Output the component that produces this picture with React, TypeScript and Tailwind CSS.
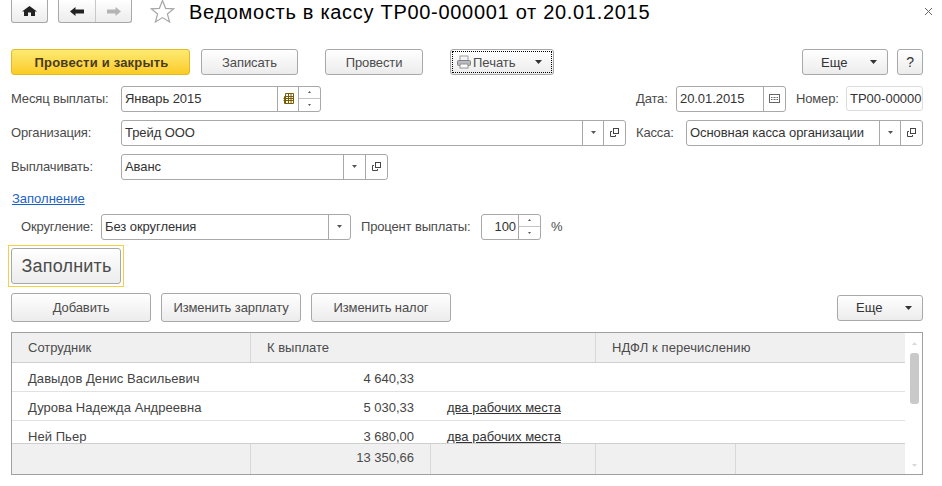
import React from "react";

const F = "[font-family:'Liberation_Sans',Arial,sans-serif]";

function Caret({ small = false }: { small?: boolean }) {
  return (
    <svg width={small ? 5 : 7} height={small ? 3 : 4} viewBox={small ? "0 0 5 3" : "0 0 7 4"} className="shrink-0">
      <path d={small ? "M0 0h5L2.5 3z" : "M0 0h7L3.5 4z"} fill={small ? "#555" : "#333"} />
    </svg>
  );
}

function Btn({ w, h = "h-[26px]", children, className = "" }: { w: string; h?: string; children: React.ReactNode; className?: string }) {
  return (
    <div className={`${w} ${h} shrink-0 rounded-[3px] border border-[#a8a8a8] bg-gradient-to-b from-white to-[#ececec] flex items-center justify-center text-[#4b4b4b] tracking-[-0.1px] ${className}`}>
      {children}
    </div>
  );
}

function MoreBtn({ className = "" }: { className?: string }) {
  return (
    <div className={`w-[86px] h-[26px] shrink-0 rounded-[3px] border border-[#a8a8a8] bg-gradient-to-b from-white to-[#ececec] flex items-center pl-[18px] text-[#333] ${className}`}>
      <span className="w-[28px]">Еще</span>
      <span className="ml-[21px]"><Caret /></span>
    </div>
  );
}

function Cell({ w, children }: { w: string; children: React.ReactNode }) {
  return <div className={`${w} h-full border-l border-[#a8a8a8] flex items-center justify-center shrink-0`}>{children}</div>;
}

function OpenIcon() {
  return (
    <svg width="9" height="9" viewBox="0 0 9 9" fill="none" stroke="#444" strokeWidth="1">
      <rect x="3.5" y="0.5" width="5" height="5" />
      <path d="M2 3.5H0.5V8.5H5.5V7" />
    </svg>
  );
}

function Spin() {
  return (
    <div className="w-[22px] h-full border-l border-[#a8a8a8] flex flex-col shrink-0">
      <div className="flex-1 flex items-center justify-center border-b border-[#c4c4c4]">
        <svg width="3" height="2" viewBox="0 0 3 2"><path d="M1.5 0L3 2H0z" fill="#555" /></svg>
      </div>
      <div className="flex-1 flex items-center justify-center">
        <svg width="3" height="2" viewBox="0 0 3 2"><path d="M0 0h3L1.5 2z" fill="#555" /></svg>
      </div>
    </div>
  );
}

function Field({ w, children, text, align = "" }: { w: string; children?: React.ReactNode; text: string; align?: string }) {
  return (
    <div className={`${w} h-[26px] shrink-0 rounded-[3px] border border-[#a8a8a8] bg-white flex items-center overflow-hidden text-[#333]`}>
      <div className={`flex-1 min-w-0 pl-[3px] whitespace-nowrap overflow-hidden tracking-[-0.07px] ${align}`}>{text}</div>
      {children}
    </div>
  );
}

function Label({ className = "", children }: { className?: string; children: React.ReactNode }) {
  return <div className={`shrink-0 whitespace-nowrap text-[#4b4b4b] tracking-[-0.15px] ${className}`}>{children}</div>;
}

const calendarGrid = [0, 1, 2, 3, 4];

function Row({ name, amount, link, last = false }: { name: string; amount: string; link?: boolean; last?: boolean }) {
  return (
    <div className={`flex shrink-0 h-[29px] text-[#444] ${last ? "" : "border-b border-[#e2e2e2]"}`}>
      <div className="w-[238px] pl-[16px] pt-[8px] whitespace-nowrap tracking-[0.05px]">{name}</div>
      <div className="w-[164px] text-right pt-[8px]">{amount}</div>
      {link && <div className="pl-[33px] pt-[8px] underline whitespace-nowrap text-[#333]">два рабочих места</div>}
    </div>
  );
}

export default function App() {
  return (
    <div className={`${F} w-[942px] h-[486px] overflow-hidden bg-white text-[13px] leading-[15px] relative`}>
      {/* header */}
      <div className="flex items-start h-[49px]">
        <div className="ml-[11px] w-[37px] h-[23px] rounded-b-[3px] border border-t-0 border-[#a8a8a8] bg-gradient-to-b from-white to-[#ececec] flex items-center justify-center">
          <svg width="15" height="10" viewBox="0 0 15 10"><path d="M7.5 0L15 5.5H13V10H9V6.5H6V10H2V5.5H0z" fill="#222" /></svg>
        </div>
        <div className="ml-[10px] w-[74px] h-[23px] rounded-b-[3px] border border-t-0 border-[#a8a8a8] bg-gradient-to-b from-white to-[#ececec] flex">
          <div className="w-[37px] h-full flex items-center justify-center border-r border-[#c8c8c8]">
            <svg width="14" height="9" viewBox="0 0 14 9"><path d="M0 4.5L5.5 0V2.5H14V6.5H5.5V9z" fill="#222" /></svg>
          </div>
          <div className="flex-1 flex items-center justify-center">
            <svg width="14" height="9" viewBox="0 0 14 9"><path d="M14 4.5L8.5 0V2.5H0V6.5H8.5V9z" fill="#b4b4b4" /></svg>
          </div>
        </div>
        <svg className="ml-[18px] mt-[-1px]" width="25" height="24" viewBox="0 0 25 24" fill="#fff" stroke="#a6a6a6" strokeWidth="1.2">
          <path d="M12.5 1.5L15.6 9.3L23.8 9.8L17.4 15L19.6 23L12.5 18.6L5.4 23L7.6 15L1.2 9.8L9.4 9.3z" />
        </svg>
        <div className="ml-[14px] text-[20px] leading-[24px] tracking-[0.7px] text-black whitespace-nowrap">Ведомость в кассу ТР00-000001 от 20.01.2015</div>
        <svg className="absolute left-[925px] top-[8px]" width="7" height="7" viewBox="0 0 7 7" stroke="#666" strokeWidth="1"><path d="M0 0L7 7M7 0L0 7" /></svg>
      </div>

      {/* command bar */}
      <div className="flex h-[26px] pl-[11px]">
        <div className="w-[179px] h-[26px] shrink-0 rounded-[3px] border border-[#e3b92a] bg-gradient-to-b from-[#fdea70] to-[#fbcb1e] flex items-center justify-center pl-[2px] font-bold tracking-[0.2px] text-[#4a3b20]">Провести и закрыть</div>
        <Btn w="w-[97px]" className="ml-[11px]">Записать</Btn>
        <Btn w="w-[98px]" className="ml-[27px]">Провести</Btn>
        <div className="ml-[27px] w-[104px] h-[26px] shrink-0 rounded-[3px] border border-[#a8a8a8] bg-gradient-to-b from-white to-[#ececec] p-[1px]">
          <div className="w-full h-full border border-dotted border-black flex items-center pl-[4px] text-[#4b4b4b]">
            <svg width="14" height="14" viewBox="0 0 14 14" className="shrink-0">
              <rect x="3" y="1" width="8" height="5" fill="#f4f4f4" stroke="#a0a0a0" />
              <rect x="0.5" y="5.5" width="13" height="5" rx="1" fill="#b9bcc0" stroke="#808080" />
              <rect x="3" y="9" width="8" height="4" fill="#fff" stroke="#909090" />
            </svg>
            <span className="ml-[2px] w-[43px]">Печать</span>
            <span className="ml-[19px]"><Caret /></span>
          </div>
        </div>
        <MoreBtn className="ml-[248px]" />
        <Btn w="w-[26px]" className="ml-[9px] text-[#333] text-[14px]">?</Btn>
      </div>

      {/* row 1 */}
      <div className="flex items-center h-[25px] mt-[11px] pl-[11px]">
        <Label className="w-[110px]">Месяц выплаты:</Label>
        <Field w="w-[200px]" text="Январь 2015">
          <Cell w="w-[21px]">
            <svg width="11" height="11" viewBox="0 0 11 11" fill="none" stroke="#7a5c00" strokeWidth="1">
              <path d="M2.5 .5h8v10h-9v-7h9M.5 5.5h10M.5 7.5h10M2.5 .5v10M5.5 .5v10M8 .5v10" />
            </svg>
          </Cell>
          <Spin />
        </Field>
        <Label className="ml-[315px] w-[40px]">Дата:</Label>
        <Field w="w-[110px]" text="20.01.2015">
          <Cell w="w-[22px]">
            <svg width="11" height="9" viewBox="0 0 11 9">
              <rect x="0.5" y="0.5" width="10" height="8" fill="#fff" stroke="#666" />
              {calendarGrid.map((i) => (
                <React.Fragment key={i}>
                  <rect x={2 + i * 1.5} y="3" width="1" height="1" fill="#666" />
                  <rect x={2 + i * 1.5} y="5" width="1" height="1" fill="#666" />
                </React.Fragment>
              ))}
            </svg>
          </Cell>
        </Field>
        <Label className="ml-[10px] w-[50px]">Номер:</Label>
        <div className="w-[77px] h-[25px] shrink-0 rounded-[3px] border border-[#dcdcdc] flex items-center pl-[3px] overflow-hidden whitespace-nowrap text-[#333]">ТР00-00000</div>
      </div>

      {/* row 2 */}
      <div className="flex items-center h-[25px] mt-[9px] pl-[11px]">
        <Label className="w-[110px]">Организация:</Label>
        <Field w="w-[505px]" text="Трейд ООО">
          <Cell w="w-[21px]"><Caret small /></Cell>
          <Cell w="w-[22px]"><OpenIcon /></Cell>
        </Field>
        <Label className="ml-[10px] w-[50px]">Касса:</Label>
        <Field w="w-[237px]" text="Основная касса организации">
          <Cell w="w-[21px]"><Caret small /></Cell>
          <Cell w="w-[22px]"><OpenIcon /></Cell>
        </Field>
      </div>

      {/* row 3 */}
      <div className="flex items-center h-[25px] mt-[9px] pl-[11px]">
        <Label className="w-[110px]">Выплачивать:</Label>
        <Field w="w-[267px]" text="Аванс">
          <Cell w="w-[22px]"><Caret small /></Cell>
          <Cell w="w-[22px]"><OpenIcon /></Cell>
        </Field>
      </div>

      {/* link */}
      <div className="mt-[12px] ml-[12px] h-[14px] text-[#1c5fc4] underline">Заполнение</div>

      {/* row 5 */}
      <div className="flex items-center h-[25px] mt-[9px] pl-[21px]">
        <Label className="w-[80px]">Округление:</Label>
        <Field w="w-[250px]" text="Без округления">
          <Cell w="w-[22px]"><Caret small /></Cell>
        </Field>
        <Label className="ml-[10px] w-[120px]">Процент выплаты:</Label>
        <Field w="w-[60px]" text="100" align="text-right pr-[2px]">
          <Spin />
        </Field>
        <Label className="ml-[10px]">%</Label>
      </div>

      {/* fill button */}
      <div className="ml-[8px] mt-[6px] w-[116px] h-[42px] border border-[#f6cf45] p-[2px]">
        <div className="w-full h-full rounded-[3px] border border-[#a8a8a8] bg-gradient-to-b from-white to-[#ececec] flex items-center justify-center pl-[1px] text-[18px] tracking-[0.2px] text-[#4b4b4b]">Заполнить</div>
      </div>

      {/* table toolbar */}
      <div className="flex items-center h-[29px] mt-[6px] pl-[11px]">
        <Btn w="w-[140px]" h="h-[29px]">Добавить</Btn>
        <Btn w="w-[140px]" h="h-[29px]" className="ml-[10px]">Изменить зарплату</Btn>
        <Btn w="w-[140px]" h="h-[29px]" className="ml-[10px]">Изменить налог</Btn>
        <MoreBtn className="ml-[386px]" />
      </div>

      {/* table */}
      <div className="ml-[11px] mt-[10px] w-[912px] h-[143px] border border-[#a0a0a0] flex">
        <div className="w-[893px] h-full flex flex-col">
          <div className="flex h-[30px] shrink-0 bg-[#f0f0f0] border-b border-[#cfcfcf] text-[#4b4b4b]">
            <div className="w-[239px] pl-[16px] pt-[7px] border-r border-[#d8d8d8]">Сотрудник</div>
            <div className="w-[345px] pl-[16px] pt-[7px] border-r border-[#d8d8d8]">К выплате</div>
            <div className="flex-1 pl-[16px] pt-[7px] tracking-[0.1px]">НДФЛ к перечислению</div>
          </div>
          <div className="h-[80px] shrink-0 overflow-hidden flex flex-col">
            <Row name="Давыдов Денис Васильевич" amount="4 640,33" />
            <Row name="Дурова Надежда Андреевна" amount="5 030,33" link />
            <Row name="Ней Пьер" amount="3 680,00" link last />
          </div>
          <div className="flex flex-1 bg-[#f0f0f0] border-t border-[#cfcfcf] text-[#4b4b4b]">
            <div className="w-[239px] border-r border-[#d8d8d8]" />
            <div className="w-[180px] border-r border-[#d8d8d8] text-right pr-[16px] pt-[6px]">13 350,66</div>
            <div className="w-[165px] border-r border-[#d8d8d8]" />
            <div className="w-[140px] border-r border-[#d8d8d8]" />
            <div className="flex-1" />
          </div>
        </div>
        <div className="flex-1 flex flex-col items-center pt-[9px] pl-[1px]">
          <svg width="5" height="3" viewBox="0 0 5 3"><path d="M2.5 0L5 3H0z" fill="#d8d8d8" /></svg>
          <div className="mt-[8px] w-[9px] h-[51px] rounded-[3px] bg-[#c9c9c9]" />
          <div className="flex-1" />
          <svg className="mb-[7px]" width="5" height="3" viewBox="0 0 5 3"><path d="M0 0h5L2.5 3z" fill="#d8d8d8" /></svg>
        </div>
      </div>
    </div>
  );
}
